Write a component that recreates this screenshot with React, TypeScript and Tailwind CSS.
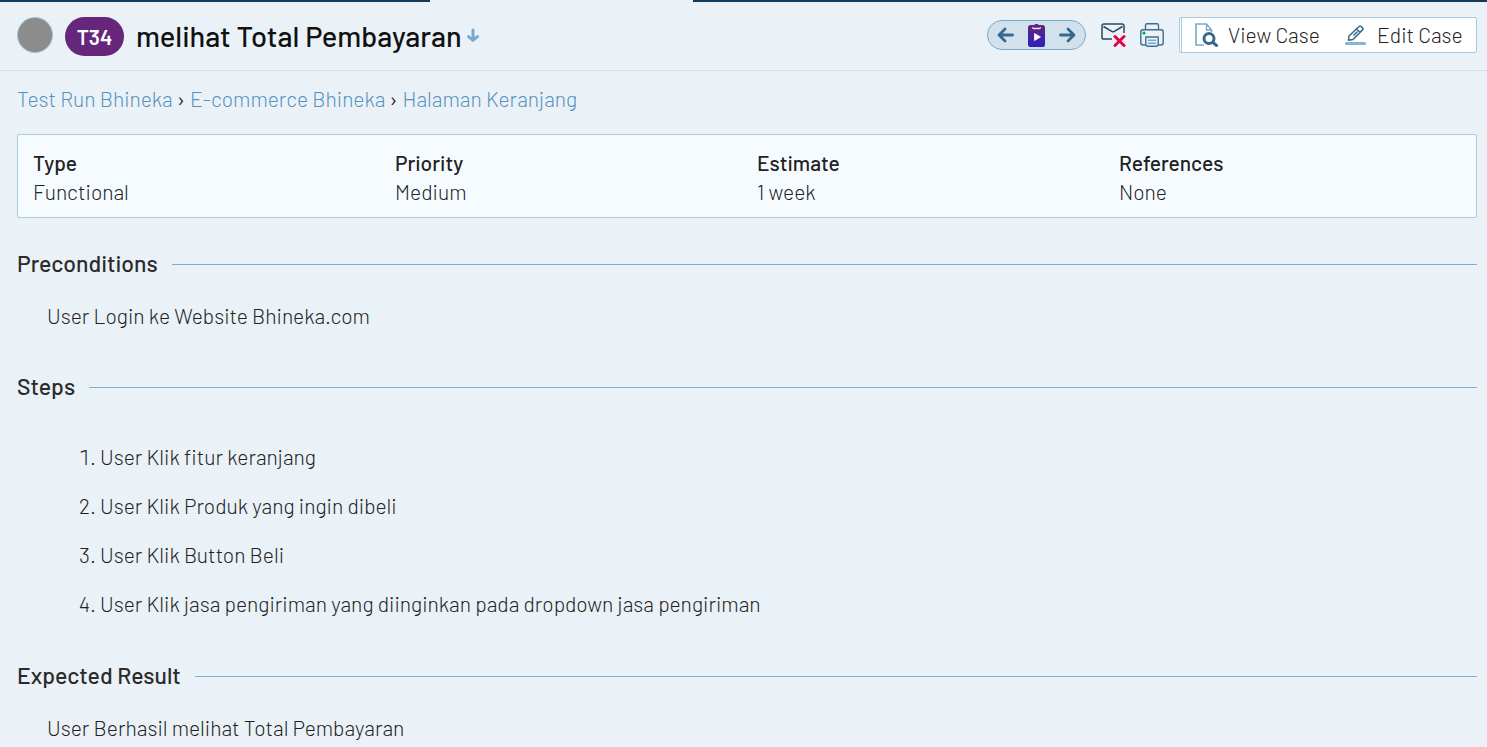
import type { ReactNode } from "react";

const crumbs = ["Test Run Bhineka", "E-commerce Bhineka", "Halaman Keranjang"];

const fields = [
  { label: "Type", value: "Functional" },
  { label: "Priority", value: "Medium" },
  { label: "Estimate", value: "1 week" },
  { label: "References", value: "None" },
];

const steps = [
  "User Klik fitur keranjang",
  "User Klik Produk yang ingin dibeli",
  "User Klik Button Beli",
  "User Klik jasa pengiriman yang diinginkan pada dropdown jasa pengiriman",
];

function ArrowIcon({ className }: { className: string }) {
  return (
    <svg viewBox="0 0 18 18" className={className} fill="none" stroke="currentColor" strokeWidth="2.8" strokeLinecap="round" strokeLinejoin="round" aria-hidden="true">
      <path d="M15.500 9H2.500M8 3L2 9l6 6" />
    </svg>
  );
}

function DownIcon() {
  return (
    <svg viewBox="0 0 14 15" className="h-[15px] w-3.5" fill="none" stroke="currentColor" strokeWidth="3" strokeLinecap="round" strokeLinejoin="round" aria-hidden="true">
      <path d="M7 2v10M2.500 8.500L7 12.500l4.500-4" />
    </svg>
  );
}

function RunIcon() {
  return (
    <svg viewBox="0 0 17 23" className="h-[23px] w-[17px]" aria-hidden="true">
      <defs>
        <linearGradient id="run-fill" x1="0" y1="0" x2="0" y2="1">
          <stop offset="0" stopColor="#64257c" />
          <stop offset="1" stopColor="#2d1fc0" />
        </linearGradient>
      </defs>
      <rect x="0" y="1" width="17" height="22" rx="2.5" fill="url(#run-fill)" />
      <rect x="6.5" y="0" width="4" height="3" rx="1" fill="#64257c" />
      <path d="M4.500 3.200c0 1 .8 1.300 1.500 1.300h5c.7 0 1.500-.3 1.500-1.300" fill="none" stroke="#dcecf3" strokeWidth="1.300" />
      <path d="M6.5 9.5v7l6-3.5z" fill="#fff" stroke="#fff" strokeWidth=".8" strokeLinejoin="round" />
    </svg>
  );
}

function UnsubscribeIcon() {
  return (
    <svg viewBox="0 0 25 24" className="h-6 w-[25px]" fill="none" aria-hidden="true">
      <path d="M11 16H2.800A1.800 1.800 0 0 1 1 14.200V2.800A1.800 1.800 0 0 1 2.800 1h18.400A1.800 1.800 0 0 1 23 2.800V10M2.500 3.500L10.700 8.300q1.300.8 2.600 0L21.500 3.500" stroke="#264a61" strokeWidth="1.500" />
      <path d="M14 13.500l9 9M23 13.500l-9 9" stroke="#e60046" strokeWidth="3" strokeLinecap="round" />
    </svg>
  );
}

function PrinterIcon() {
  return (
    <svg viewBox="0 0 24 24" className="size-6" fill="none" stroke="#3d7090" strokeWidth="1.4" strokeLinejoin="round" aria-hidden="true">
      <path d="M5.500 6.500V2.500Q5.500.8 7 .8h10q1.500 0 1.500 1.700v4" />
      <path d="M5.500 22H3Q.8 22 .8 20V9Q.8 6.800 3 6.800h18q2.200 0 2.200 2.200v11q0 2-2.200 2h-2.500" />
      <path d="M5.800 14h12.400v7q0 2.200-2 2.200H7.800q-2 0-2-2.200z" />
      <path d="M8 17.200h8M8 20.200h8" stroke="#78a9ca" />
      <circle cx="4" cy="10" r="1.600" fill="#00a574" stroke="none" />
    </svg>
  );
}

function ViewIcon() {
  return (
    <svg viewBox="0 0 23 24" className="h-6 w-[23px]" fill="none" aria-hidden="true">
      <path d="M9 22H1V1h10.500M16.500 7v2" stroke="#78a9ca" strokeWidth="1.600" />
      <path d="M11.500 1v6h5z" stroke="#78a9ca" strokeWidth="1.400" strokeLinejoin="round" />
      <circle cx="14" cy="15.500" r="5" stroke="#37698c" strokeWidth="3" />
      <path d="M18 19.500l3.500 3" stroke="#37698c" strokeWidth="3" strokeLinecap="round" />
    </svg>
  );
}

function EditIcon() {
  return (
    <svg viewBox="0 0 22 20" className="h-5 w-[22px]" fill="none" aria-hidden="true">
      <path d="M4 11L14 1.500q1-.9 2 0l1.500 1.400q1 1 0 2L8 14.500l-4.500.7zM11.500 4l3.500 3.300M8.500 10.500l4-4" stroke="#37698c" strokeWidth="1.500" strokeLinejoin="round" />
      <rect x="0" y="17" width="21" height="3" rx="1.200" fill="#86b4d2" />
    </svg>
  );
}

function Section({ title, children }: { title: string; children: ReactNode }) {
  return (
    <section>
      <div className="flex items-center gap-3.5">
        <h2 className="pb-0.5 text-[23px] leading-6 font-medium text-[#2b2b2b]">{title}</h2>
        <div className="h-px flex-1 bg-[#78aecf]" />
      </div>
      {children}
    </section>
  );
}

export default function App() {
  return (
    <div className="min-h-screen overflow-hidden bg-[#eaf1f7] font-['Barlow','Roboto',sans-serif] text-[21px] leading-7 font-light text-[#222]">
      <div className="flex h-0.5">
        <div className="w-[430px] bg-[#133a58]" />
        <div className="w-[263px]" />
        <div className="flex-1 bg-[#133a58]" />
      </div>
      <header className="flex h-[69px] items-center justify-between border-b border-[#cfe0eb] pr-2.5 pb-0.5 pl-[17px]">
        <div className="flex items-center">
          <span className="size-9 rounded-full border border-[#9fc3d9] bg-[#8c8c8c]" />
          <span className="mt-0.5 ml-3 flex h-[39px] w-[59px] items-center justify-center rounded-full bg-[#65267b] pt-0.5 text-[21px] font-semibold text-white">T34</span>
          <h1 className="ml-3 pt-0.5 text-[29px] leading-9 font-medium text-[#111]">melihat Total Pembayaran</h1>
          <button type="button" aria-label="Expand" className="ml-1 text-[#78aacd]">
            <DownIcon />
          </button>
        </div>
        <div className="flex items-center">
          <nav aria-label="Tests" className="flex h-[30px] w-[99px] items-center justify-between rounded-full border border-[#78aacd] bg-[#d1e2ec] px-[9px] text-[#37698c]">
            <button type="button" aria-label="Previous test">
              <ArrowIcon className="size-[18px]" />
            </button>
            <button type="button" aria-label="Test run">
              <RunIcon />
            </button>
            <button type="button" aria-label="Next test">
              <ArrowIcon className="size-[18px] rotate-180" />
            </button>
          </nav>
          <button type="button" aria-label="Unsubscribe" className="ml-[15px]">
            <UnsubscribeIcon />
          </button>
          <button type="button" aria-label="Print" className="ml-3.5">
            <PrinterIcon />
          </button>
          <div className="ml-[15px] flex h-9 rounded-xs border border-[#a9cbdf] bg-white pl-px">
            <a href="#view" className="flex w-[150px] items-center gap-2.5 border-l border-[#a9cbdf] pl-[13px]">
              <ViewIcon />
              View Case
            </a>
            <a href="#edit" className="flex w-[145px] items-center gap-2.5 pl-3.5">
              <EditIcon />
              Edit Case
            </a>
          </div>
        </div>
      </header>
      <main className="pr-2.5 pl-[17px]">
        <nav aria-label="Breadcrumb" className="flex gap-1 pt-3.5">
          {crumbs.map((crumb, index) => (
            <span key={crumb} className="flex gap-[5px]">
              {index > 0 && <span className="font-normal">›</span>}
              <a href="#crumb" className="text-[#5592c0]">
                {crumb}
              </a>
            </span>
          ))}
        </nav>
        <dl className="mt-[21px] grid h-[84px] grid-cols-4 content-center gap-5 rounded-xs border border-[#a9cbdf] bg-[#f6fbff] px-[15px] pt-0.5">
          {fields.map((field) => (
            <div key={field.label} className="leading-[29px]">
              <dt className="font-medium">{field.label}</dt>
              <dd>{field.value}</dd>
            </div>
          ))}
        </dl>
        <div className="mt-[33px]">
          <Section title="Preconditions">
            <p className="mt-[25px] mb-11 pl-[30px]">User Login ke Website Bhineka.com</p>
          </Section>
          <Section title="Steps">
            <ol className="mt-[43px] mb-[45px] list-decimal space-y-[21px] pl-[83px]">
              {steps.map((step) => (
                <li key={step}>{step}</li>
              ))}
            </ol>
          </Section>
          <Section title="Expected Result">
            <p className="mt-[25px] pl-[30px]">User Berhasil melihat Total Pembayaran</p>
          </Section>
        </div>
      </main>
    </div>
  );
}
